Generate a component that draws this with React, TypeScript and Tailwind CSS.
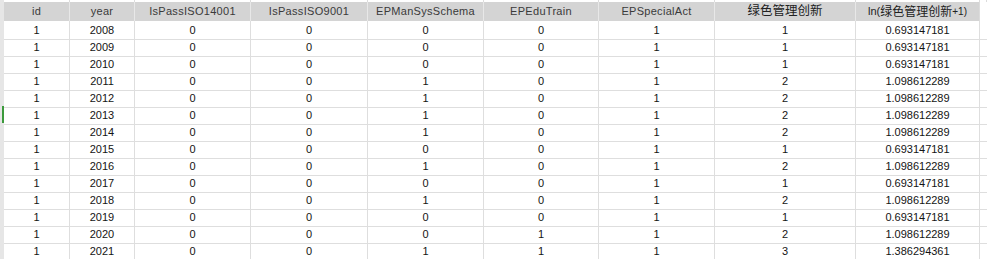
const headers = [
  "id",
  "year",
  "IsPassISO14001",
  "IsPassISO9001",
  "EPManSysSchema",
  "EPEduTrain",
  "EPSpecialAct",
];

const rows: (string | number)[][] = [
  [1, 2008, 0, 0, 0, 0, 1, 1, "0.693147181"],
  [1, 2009, 0, 0, 0, 0, 1, 1, "0.693147181"],
  [1, 2010, 0, 0, 0, 0, 1, 1, "0.693147181"],
  [1, 2011, 0, 0, 1, 0, 1, 2, "1.098612289"],
  [1, 2012, 0, 0, 1, 0, 1, 2, "1.098612289"],
  [1, 2013, 0, 0, 1, 0, 1, 2, "1.098612289"],
  [1, 2014, 0, 0, 1, 0, 1, 2, "1.098612289"],
  [1, 2015, 0, 0, 0, 0, 1, 1, "0.693147181"],
  [1, 2016, 0, 0, 1, 0, 1, 2, "1.098612289"],
  [1, 2017, 0, 0, 0, 0, 1, 1, "0.693147181"],
  [1, 2018, 0, 0, 1, 0, 1, 2, "1.098612289"],
  [1, 2019, 0, 0, 0, 0, 1, 1, "0.693147181"],
  [1, 2020, 0, 0, 0, 1, 1, 2, "1.098612289"],
  [1, 2021, 0, 0, 1, 1, 1, 3, "1.386294361"],
];

// column widths include the 1px right gridline
const cols = "grid-cols-[4px_66px_65px_116px_117px_116px_115px_116px_141px_124px_1fr]";
const font = { fontFamily: '"Liberation Sans", "Noto Sans CJK SC", sans-serif' };

export default function App() {
  return (
    <div className="w-[987px] h-[259px] overflow-hidden bg-white" style={font}>
      {/* tail of the row above the header */}
      <div className={`grid ${cols} h-[2px]`}>
        <div className="bg-[#e6e6e6]" />
        {Array.from({ length: 10 }).map((_, i) => (
          <div key={i} className="border-r border-[#dcdcdc]" />
        ))}
      </div>

      {/* header */}
      <div className={`grid ${cols} h-[19px]`}>
        <div className="bg-[#e6e6e6]" />
        {headers.map((h) => (
          <div
            key={h}
            className="bg-[#d4d4d4] border-r border-[#e8e8e8] flex items-center justify-center text-[11px] tracking-[0.3px] text-[#3a3a3a]"
          >
            {h}
          </div>
        ))}
        <div className="bg-[#d4d4d4] border-r border-[#e8e8e8] flex items-center justify-center text-[12.5px] text-[#222]">
          绿色管理创新
        </div>
        <div className="bg-[#d4d4d4] border-r border-[#dcdcdc] flex items-center justify-center text-[#222]">
          <span className="text-[11px]">ln(</span>
          <span className="text-[12px]">绿色管理创新</span>
          <span className="text-[10px]">+1)</span>
        </div>
        <div />
      </div>

      {/* data */}
      {rows.map((r, i) => (
        <div key={i} className={`grid ${cols} h-[17px]`}>
          <div className="bg-[#e6e6e6] border-b border-[#d0d0d0] flex justify-end">
            {r[1] === 2013 && <div className="w-[2px] bg-[#3c9a3c]" />}
          </div>
          {r.map((v, j) => (
            <div
              key={j}
              className="border-r border-b border-[#dedede] flex items-center justify-center text-[11px] text-[#141414] pt-[1px]"
            >
              {v}
            </div>
          ))}
          <div className="border-b border-[#dedede]" />
        </div>
      ))}
    </div>
  );
}
